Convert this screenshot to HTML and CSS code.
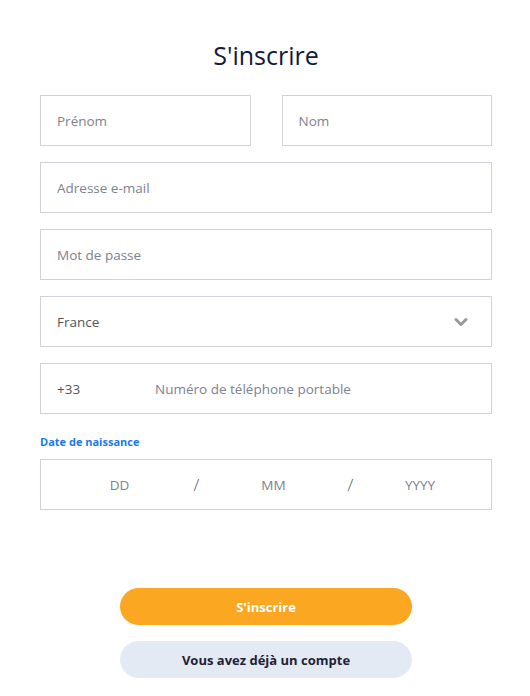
FILE: index.html
```html
<!DOCTYPE html>
<html lang="fr">

<head>
  <meta charset="utf-8">
  <meta name="viewport" content="width=device-width, initial-scale=1">
  <title>S'inscrire</title>
  <link rel="stylesheet" href="styles.css">
</head>

<body>
  <main class="signup">
    <h1 class="signup-title">S'inscrire</h1>
    <form class="signup-form">
      <div class="name-row">
        <input type="text" class="field" placeholder="Prénom">
        <input type="text" class="field" placeholder="Nom">
      </div>
      <input type="email" class="field" placeholder="Adresse e-mail">
      <input type="password" class="field" placeholder="Mot de passe">
      <div class="field select-field">
        <span>France</span>
        <svg class="chevron" width="14" height="10" viewBox="0 0 14 10">
          <path d="M2 2.5 L7 7.5 L12 2.5" fill="none" stroke="#9a9a9a" stroke-width="3" stroke-linecap="round" stroke-linejoin="round"/>
        </svg>
      </div>
      <div class="field phone-field">
        <span class="phone-code">+33</span>
        <input type="tel" class="phone-input" placeholder="Numéro de téléphone portable">
      </div>
      <div class="birth">
        <label class="birth-label">Date de naissance</label>
        <div class="field date-field">
          <input type="text" class="date-part" placeholder="DD">
          <span class="date-sep">/</span>
          <input type="text" class="date-part" placeholder="MM">
          <span class="date-sep">/</span>
          <input type="text" class="date-part" placeholder="YYYY">
        </div>
      </div>
      <div class="actions">
        <button type="submit" class="btn btn-primary">S'inscrire</button>
        <button type="button" class="btn btn-secondary">Vous avez déjà un compte</button>
      </div>
    </form>
  </main>
</body>

</html>
```

FILE: styles.css
```css
body {
  margin: 0;
  font-family: "Open Sans", "Liberation Sans", sans-serif;
  background-color: #fff;
  color: #1b1f2e;
}
.signup {
  width: 452px;
  margin: 0 0 0 40px;
  padding-top: 38px;
}
.signup-title {
  margin: 0 0 23px;
  text-align: center;
  font-size: 25px;
  font-weight: 400;
  color: #0e1a3d;
  line-height: 34px;
}
.signup-form {
  display: flex;
  flex-direction: column;
  gap: 16px;
}
.name-row {
  display: flex;
  gap: 31px;
}
.name-row .field {
  flex: 1;
  min-width: 0;
}
.field {
  box-sizing: border-box;
  height: 51px;
  width: 100%;
  border: 1px solid #cfd2d8;
  padding: 0 16px;
  font-family: inherit;
  font-size: 13.5px;
  color: #555;
  background: #fff;
  outline: none;
}
.field::placeholder {
  color: #7d8190;
}
.select-field {
  display: flex;
  align-items: center;
  justify-content: space-between;
  color: #555;
}
.chevron {
  margin-right: 7px;
}
.phone-field {
  display: flex;
  align-items: center;
}
.phone-code {
  width: 98px;
  color: #555;
}
.phone-input,
.date-part {
  border: none;
  outline: none;
  font-family: inherit;
  font-size: 13.5px;
  background: transparent;
  padding: 0;
}
.phone-input {
  flex: 1;
}
.phone-input::placeholder,
.date-part::placeholder {
  color: #7d8190;
}
.birth {
  display: flex;
  flex-direction: column;
  gap: 10px;
  margin-top: 4px;
}
.birth-label {
  font-size: 11px;
  line-height: 15px;
  font-weight: 700;
  color: #1a7ae8;
}
.date-field {
  display: grid;
  grid-template-columns: 77px 77px 77px 77px 62px;
  align-items: center;
  padding: 0 0 0 40px;
}
.date-part {
  width: 100%;
  text-align: center;
}
.date-sep {
  text-align: center;
  font-size: 17px;
  font-weight: 300;
  color: #555;
}
.actions {
  display: flex;
  flex-direction: column;
  align-items: center;
  gap: 16px;
  margin-top: 62px;
}
.btn {
  width: 292px;
  height: 37px;
  border: none;
  border-radius: 19px;
  font-family: inherit;
  font-size: 13px;
  font-weight: 700;
  cursor: pointer;
}
.btn-primary {
  background-color: #fba722;
  color: #fff;
}
.btn-secondary {
  background-color: #e4eaf4;
  color: #1e2233;
}
```
